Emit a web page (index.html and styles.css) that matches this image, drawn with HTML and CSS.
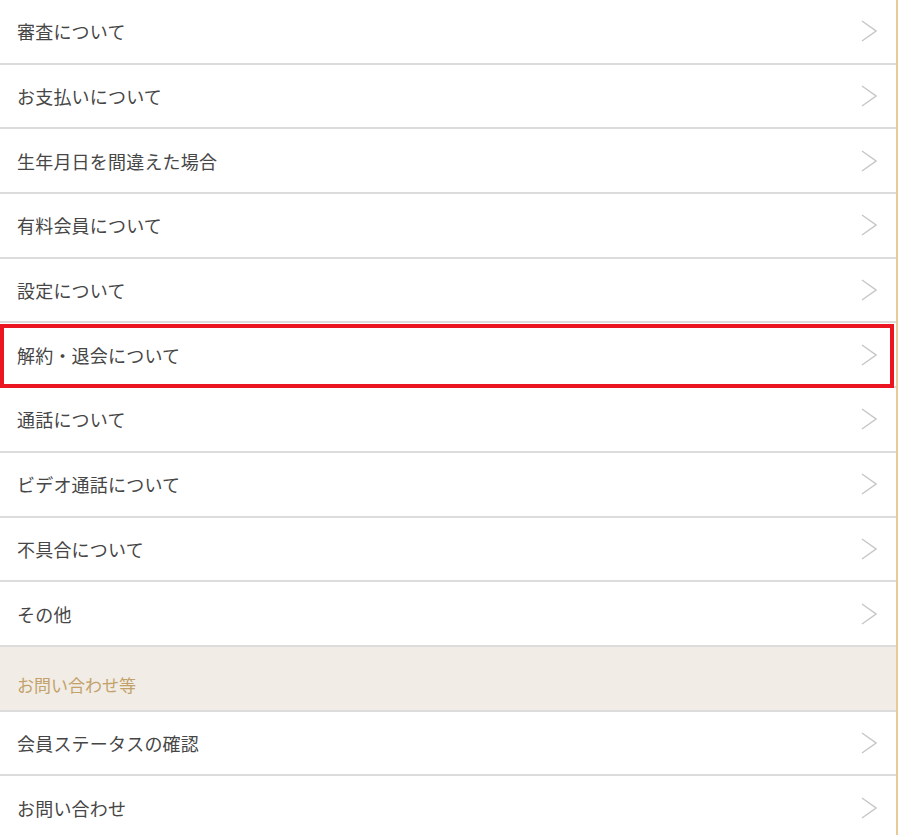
FILE: index.html
```html
<!DOCTYPE html>
<html lang="ja">
<head>
<meta charset="utf-8">
<link rel="stylesheet" href="styles.css">
</head>
<body>
<div class="page">
  <ul class="menu">
    <li class="row"><span>審査について</span><svg class="chev" viewBox="0 0 16 22"><polyline points="1,1 15,11 1,21"/></svg></li>
    <li class="row"><span>お支払いについて</span><svg class="chev" viewBox="0 0 16 22"><polyline points="1,1 15,11 1,21"/></svg></li>
    <li class="row"><span>生年月日を間違えた場合</span><svg class="chev" viewBox="0 0 16 22"><polyline points="1,1 15,11 1,21"/></svg></li>
    <li class="row"><span>有料会員について</span><svg class="chev" viewBox="0 0 16 22"><polyline points="1,1 15,11 1,21"/></svg></li>
    <li class="row"><span>設定について</span><svg class="chev" viewBox="0 0 16 22"><polyline points="1,1 15,11 1,21"/></svg></li>
    <li class="row highlighted"><span>解約・退会について</span><svg class="chev" viewBox="0 0 16 22"><polyline points="1,1 15,11 1,21"/></svg><div class="mark"></div></li>
    <li class="row"><span>通話について</span><svg class="chev" viewBox="0 0 16 22"><polyline points="1,1 15,11 1,21"/></svg></li>
    <li class="row"><span>ビデオ通話について</span><svg class="chev" viewBox="0 0 16 22"><polyline points="1,1 15,11 1,21"/></svg></li>
    <li class="row"><span>不具合について</span><svg class="chev" viewBox="0 0 16 22"><polyline points="1,1 15,11 1,21"/></svg></li>
    <li class="row"><span>その他</span><svg class="chev" viewBox="0 0 16 22"><polyline points="1,1 15,11 1,21"/></svg></li>
    <li class="section">お問い合わせ等</li>
    <li class="row"><span>会員ステータスの確認</span><svg class="chev" viewBox="0 0 16 22"><polyline points="1,1 15,11 1,21"/></svg></li>
    <li class="row"><span>お問い合わせ</span><svg class="chev" viewBox="0 0 16 22"><polyline points="1,1 15,11 1,21"/></svg></li>
  </ul>
</div>
</body>
</html>
```

FILE: styles.css
```css
html, body {
  margin: 0;
  padding: 0;
  background: #fff;
}
.page {
  width: 896px;
  border-right: 2px solid #e6cb98;
  min-height: 835px;
  overflow: hidden;
}
.menu {
  list-style: none;
  margin: 0;
  padding: 0;
  font-family: "Noto Sans CJK JP", "Noto Sans", sans-serif;
}
.row, .section {
  box-sizing: border-box;
  height: 64.7px;
  display: flex;
  align-items: center;
  justify-content: space-between;
  padding: 0 19px 0 17px;
  border-bottom: 2px solid #dcdcdc;
  font-size: 18px;
  color: #464646;
}
.row span {
  line-height: 1;
  letter-spacing: 0.2px;
}
.section {
  background: #f1ece5;
  color: #c2a26a;
  font-size: 17px;
  padding-top: 12px;
}
.chev {
  width: 16px;
  height: 22px;
  fill: none;
  stroke: #c6c6c6;
  stroke-width: 1.4;
}
.highlighted {
  position: relative;
}
.mark {
  position: absolute;
  left: 0;
  top: 1px;
  right: 2px;
  bottom: -2px;
  border: 4px solid #ea1520;
  pointer-events: none;
}
```
